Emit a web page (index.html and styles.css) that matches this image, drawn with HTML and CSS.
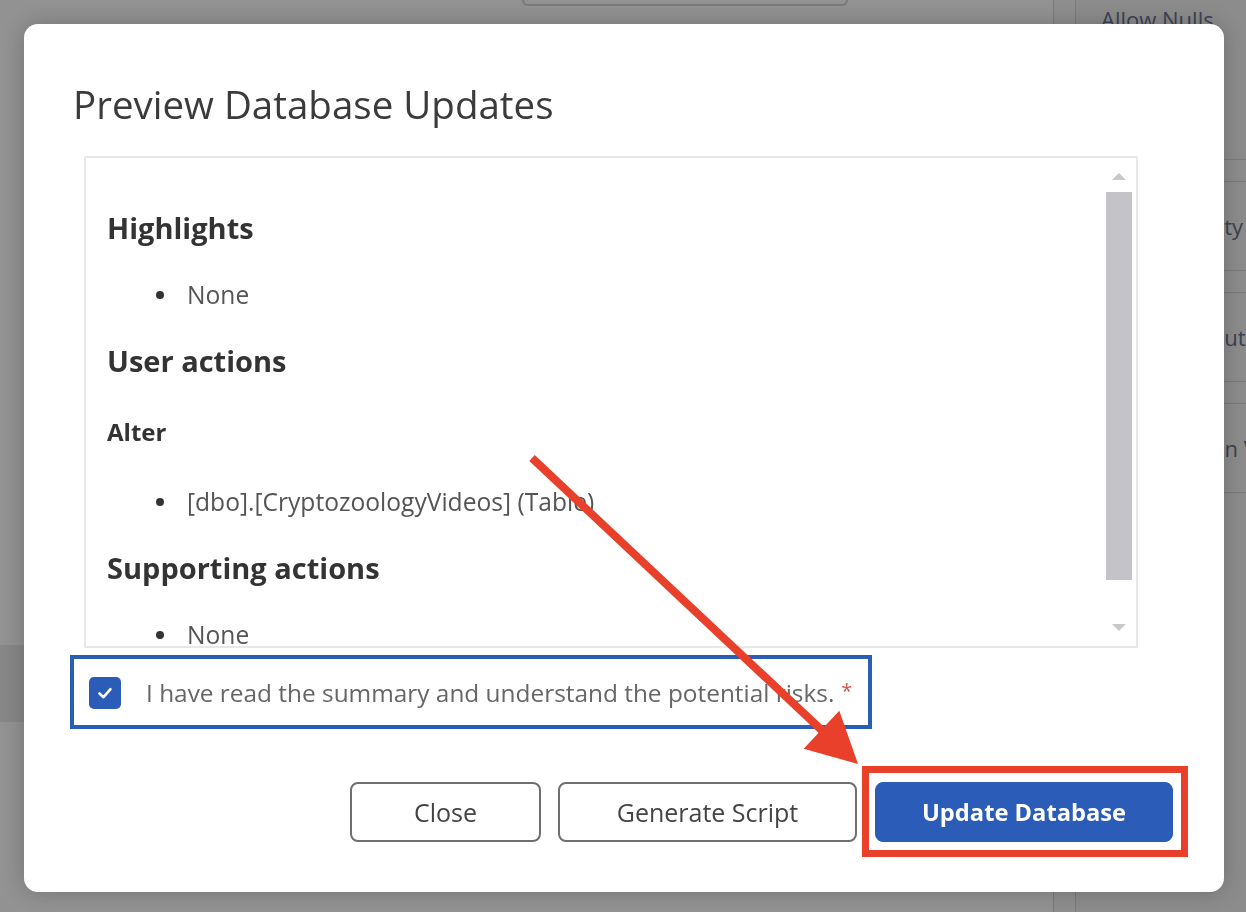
FILE: index.html
```html
<!DOCTYPE html>
<html lang="en">
<head>
<meta charset="utf-8">
<title>Preview Database Updates</title>
<link rel="stylesheet" href="styles.css">
</head>
<body>
<div class="app">
  <div class="main">
    <div class="toolbar"><div class="tb-btn"></div></div>
    <div class="band"></div>
  </div>
  <div class="gutter"></div>
  <div class="props">
    <div class="props-head">Allow Nulls</div>
    <div class="strip"></div>
    <div class="prow">Table Identity</div>
    <div class="strip"></div>
    <div class="prow">Index Attribute</div>
    <div class="strip"></div>
    <div class="prow">Data Column Value</div>
  </div>
</div>

<div class="dialog" role="dialog" aria-label="Preview Database Updates">
  <h1 class="dlg-title">Preview Database Updates</h1>
  <div class="scroll-box">
    <div class="scroll-content">
      <h2 class="sec-title">Highlights</h2>
      <ul class="items"><li>None</li></ul>
      <h2 class="sec-title">User actions</h2>
      <h3 class="sub-title">Alter</h3>
      <ul class="items"><li>[dbo].[CryptozoologyVideos] (Table)</li></ul>
      <h2 class="sec-title">Supporting actions</h2>
      <ul class="items"><li>None</li></ul>
    </div>
    <div class="scrollbar">
      <div class="sb-up"></div>
      <div class="sb-thumb"></div>
      <div class="sb-down"></div>
    </div>
  </div>
  <label class="confirm">
    <span class="checkbox">
      <svg width="20" height="20" viewBox="0 0 20 20"><path d="M4.5 10.5 L8.5 14.2 L15.5 6.2" fill="none" stroke="#fff" stroke-width="2.6" stroke-linecap="round" stroke-linejoin="round"/></svg>
    </span>
    <span class="confirm-text">I have read the summary and understand the potential risks.</span>
    <span class="req">*</span>
  </label>
  <div class="actions">
    <button class="btn btn-close">Close</button>
    <button class="btn btn-script">Generate Script</button>
    <span class="primary-wrap"><button class="btn btn-primary">Update Database</button></span>
  </div>
</div>

<svg class="annot-arrow" width="1246" height="912" viewBox="0 0 1246 912">
  <line x1="532" y1="458" x2="830" y2="738" stroke="#e8402a" stroke-width="8"/>
  <polygon points="858,764 803.7,748.8 839.3,710.8" fill="#e8402a"/>
</svg>
</body>
</html>
```

FILE: styles.css
```css
html, body {
  margin: 0;
  padding: 0;
}
body {
  width: 1246px;
  height: 912px;
  overflow: hidden;
  background: #8f8f8f;
  font-family: "Open Sans", "Noto Sans", sans-serif;
}

/* background app (dimmed) */
.app {
  display: flex;
  height: 912px;
}
.main {
  flex: 0 0 1053px;
  border-right: 1px solid #7b7b7b;
  display: flex;
  flex-direction: column;
  background: #929292;
}
.toolbar {
  height: 6px;
  padding-left: 522px;
}
.tb-btn {
  width: 326px;
  height: 6px;
  box-sizing: border-box;
  border: 2px solid #7b7b7b;
  border-top: 0;
  border-radius: 0 0 6px 6px;
}
.band {
  margin-top: 639px;
  height: 77px;
  background: #878787;
}
.gutter {
  flex: 0 0 21px;
  border-right: 1px solid #7b7b7b;
  background: #8e8e8e;
}
.props {
  flex: 1;
  min-width: 0;
  overflow: hidden;
  display: flex;
  flex-direction: column;
  background: #8c8c8c;
}
.props-head {
  height: 160px;
  box-sizing: border-box;
  border-bottom: 1px solid #7b7b7b;
  padding: 4px 0 0 25px;
  font-size: 22px;
  line-height: 30px;
  color: #3a4456;
  white-space: nowrap;
}
.strip {
  height: 21px;
  border-bottom: 1px solid #7b7b7b;
}
.prow {
  height: 88px;
  border-bottom: 1px solid #7b7b7b;
  display: flex;
  align-items: center;
  padding-left: 28px;
  font-size: 22px;
  color: #3a4250;
  white-space: nowrap;
}

/* dialog */
.dialog {
  position: fixed;
  left: 24px;
  top: 24px;
  width: 1200px;
  height: 868px;
  box-sizing: border-box;
  background: #fff;
  border-radius: 14px;
  box-shadow: 0 0 22px rgba(0, 0, 0, 0.22);
  padding: 56px 51px 0 46px;
  display: flex;
  flex-direction: column;
}
.dlg-title {
  margin: 0 0 0 3px;
  font-size: 38.5px;
  line-height: 48px;
  font-weight: 400;
  color: #3b3b3b;
}
.scroll-box {
  margin: 28px 0 0 14px;
  width: 1054px;
  height: 492px;
  box-sizing: border-box;
  border: 2px solid #e8e8e8;
  display: flex;
}
.scroll-content {
  flex: 1;
  overflow: hidden;
  padding: 52px 0 0 21px;
}
.sec-title {
  margin: 0 0 33px;
  font-size: 29px;
  line-height: 36px;
  font-weight: 700;
  color: #333;
}
.sub-title {
  margin: -29px 0 38px;
  padding-top: 33px;
  font-size: 24px;
  line-height: 32px;
  font-weight: 700;
  color: #333;
}
.items {
  list-style: none;
  margin: 0 0 32px;
  padding: 0;
}
.items li {
  display: flex;
  align-items: center;
  font-size: 24.6px;
  line-height: 32px;
  color: #555;
}
.items li::before {
  content: "";
  width: 8px;
  height: 8px;
  border-radius: 50%;
  background: #333;
  margin: 0 23px 0 49px;
}
.scrollbar {
  width: 26px;
  margin-right: 4px;
  display: flex;
  flex-direction: column;
  align-items: center;
}
.sb-up,
.sb-down {
  width: 0;
  height: 0;
  border-left: 7px solid transparent;
  border-right: 7px solid transparent;
}
.sb-up {
  margin-top: 15px;
  border-bottom: 7px solid #c8c8ca;
}
.sb-thumb {
  margin-top: 12px;
  width: 26px;
  height: 388px;
  background: #c4c3c7;
}
.sb-down {
  margin-top: 44px;
  border-top: 7px solid #c8c8ca;
}

.confirm {
  margin-top: 7px;
  width: 802px;
  height: 74px;
  box-sizing: border-box;
  border: 4px solid #2a5db5;
  display: flex;
  align-items: center;
  padding-left: 15px;
}
.checkbox {
  width: 32px;
  height: 32px;
  border-radius: 5px;
  background: #2a5cb8;
  display: flex;
  align-items: center;
  justify-content: center;
  margin-top: 1px;
}
.confirm-text {
  margin-left: 25px;
  font-size: 24.4px;
  color: #666;
}
.req {
  margin-left: 7px;
  font-size: 20px;
  color: #d2564f;
  align-self: center;
  margin-top: -4px;
}

.actions {
  margin-top: 53px;
  display: flex;
  justify-content: flex-end;
  gap: 17px;
}
.btn {
  height: 60px;
  box-sizing: border-box;
  border-radius: 8px;
  font-family: "Open Sans", "Noto Sans", sans-serif;
  font-size: 25px;
  padding: 0;
  cursor: pointer;
}
.btn-close,
.btn-script {
  background: #fff;
  border: 2px solid #6f6f6f;
  color: #444;
}
.btn-close { width: 191px; }
.btn-script { width: 299px; }
.primary-wrap {
  position: relative;
  display: flex;
  margin-left: 1px;
}
.primary-wrap::after {
  content: "";
  position: absolute;
  left: -13px;
  top: -16px;
  right: -15px;
  bottom: -15px;
  border: 7px solid #e8402a;
}
.btn-primary {
  width: 298px;
  background: #2a5cb8;
  border: 1px solid #2a5cb8;
  color: #fff;
  font-size: 23.7px;
  font-weight: 700;
}

.annot-arrow {
  position: fixed;
  left: 0;
  top: 0;
  pointer-events: none;
}
```
